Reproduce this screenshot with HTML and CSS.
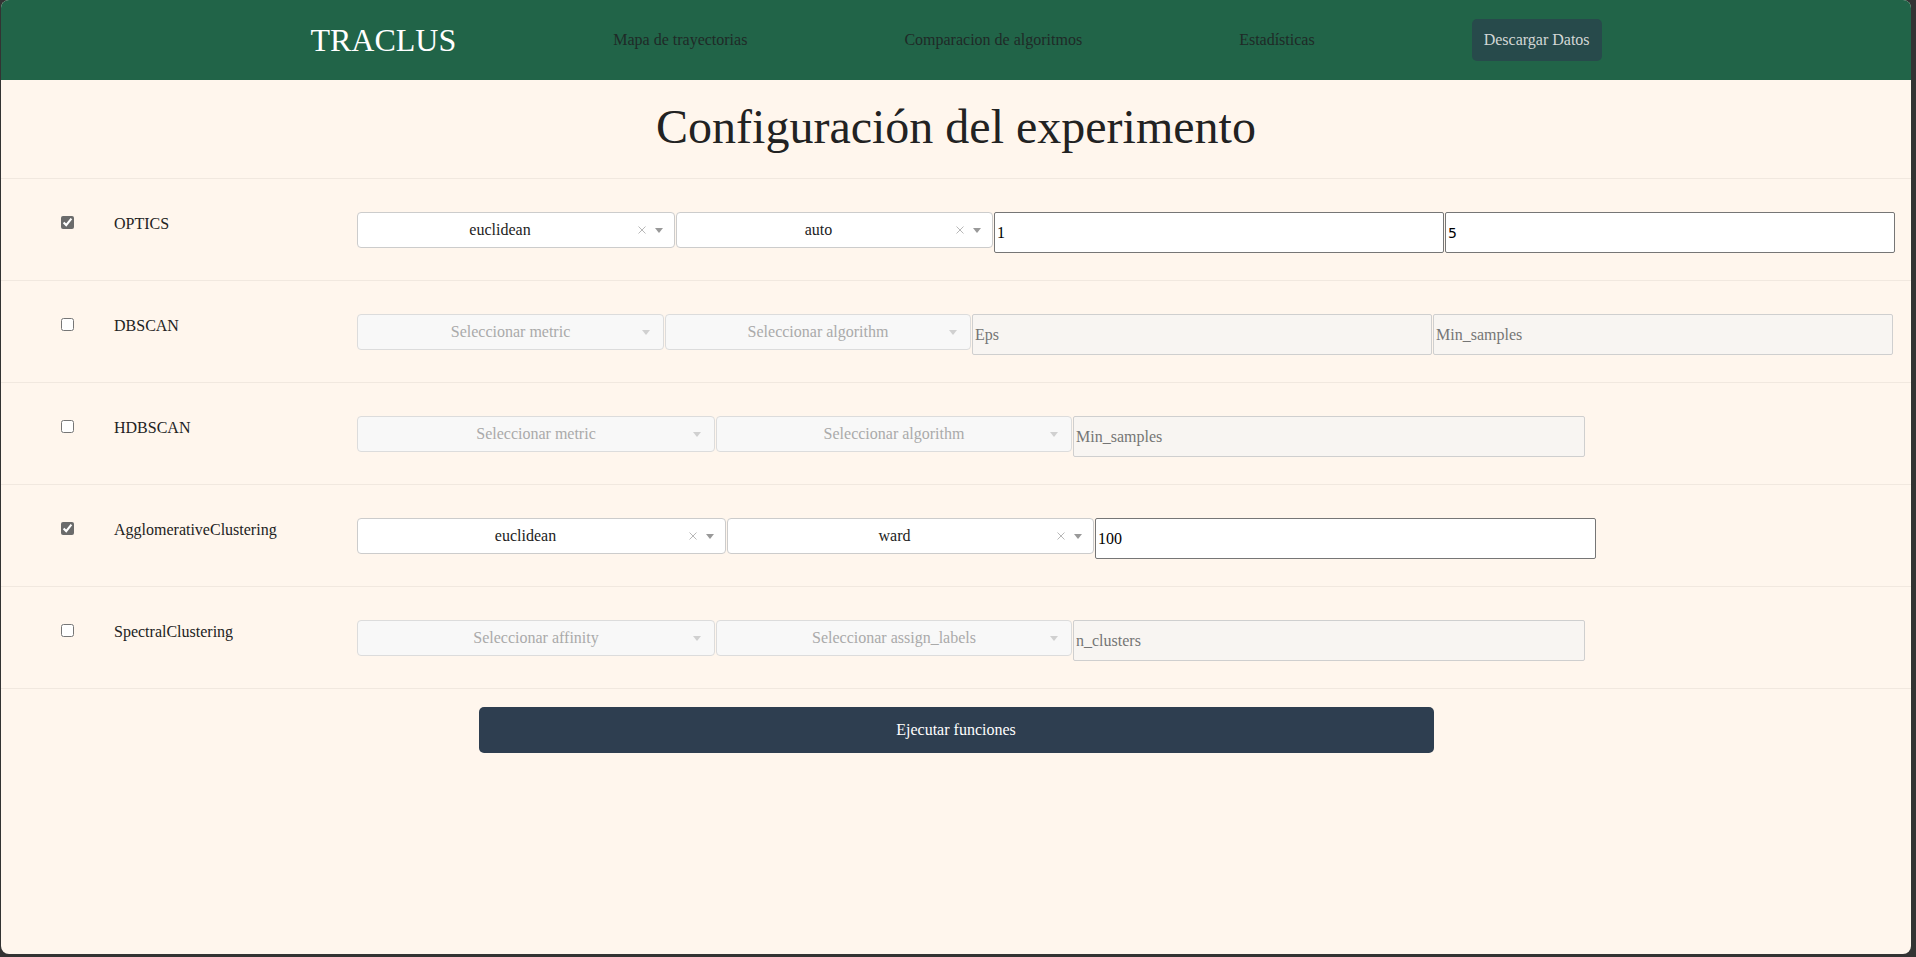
FILE: index.html
```html
<!DOCTYPE html>
<html lang="es">
<head>
<meta charset="utf-8">
<title>TRACLUS</title>
<link rel="stylesheet" href="styles.css">
</head>
<body>
<div class="window">
  <nav class="nav">
    <div class="brand">TRACLUS</div>
    <a class="nav-link">Mapa de trayectorias</a>
    <a class="nav-link">Comparacion de algoritmos</a>
    <a class="nav-link">Estadísticas</a>
    <button class="nav-btn">Descargar Datos</button>
  </nav>
  <main>
    <h1 class="title">Configuración del experimento</h1>

    <div class="row">
      <div class="algo"><input type="checkbox" class="chk" checked><span class="algo-name">OPTICS</span></div>
      <div class="controls c-optics">
        <div class="sel"><span class="sel-val clearable">euclidean</span><span class="ind"><svg class="x" width="8" height="8" viewBox="0 0 8 8"><path d="M0.5 0.5L7.5 7.5M7.5 0.5L0.5 7.5"/></svg><span class="arrow"></span></span></div>
        <div class="sel"><span class="sel-val clearable">auto</span><span class="ind"><svg class="x" width="8" height="8" viewBox="0 0 8 8"><path d="M0.5 0.5L7.5 7.5M7.5 0.5L0.5 7.5"/></svg><span class="arrow"></span></span></div>
        <input class="inp serif" type="text" value="1">
        <input class="inp sans" type="text" value="5">
      </div>
    </div>

    <div class="row">
      <div class="algo"><input type="checkbox" class="chk"><span class="algo-name">DBSCAN</span></div>
      <div class="controls c-dbscan">
        <div class="sel disabled"><span class="sel-val">Seleccionar metric</span><span class="ind"><span class="arrow"></span></span></div>
        <div class="sel disabled"><span class="sel-val">Seleccionar algorithm</span><span class="ind"><span class="arrow"></span></span></div>
        <input class="inp" type="text" placeholder="Eps" disabled>
        <input class="inp" type="text" placeholder="Min_samples" disabled>
      </div>
    </div>

    <div class="row">
      <div class="algo"><input type="checkbox" class="chk"><span class="algo-name">HDBSCAN</span></div>
      <div class="controls c-three">
        <div class="sel disabled"><span class="sel-val">Seleccionar metric</span><span class="ind"><span class="arrow"></span></span></div>
        <div class="sel disabled"><span class="sel-val">Seleccionar algorithm</span><span class="ind"><span class="arrow"></span></span></div>
        <input class="inp" type="text" placeholder="Min_samples" disabled>
      </div>
    </div>

    <div class="row">
      <div class="algo"><input type="checkbox" class="chk" checked><span class="algo-name">AgglomerativeClustering</span></div>
      <div class="controls c-agglo">
        <div class="sel"><span class="sel-val clearable">euclidean</span><span class="ind"><svg class="x" width="8" height="8" viewBox="0 0 8 8"><path d="M0.5 0.5L7.5 7.5M7.5 0.5L0.5 7.5"/></svg><span class="arrow"></span></span></div>
        <div class="sel"><span class="sel-val clearable">ward</span><span class="ind"><svg class="x" width="8" height="8" viewBox="0 0 8 8"><path d="M0.5 0.5L7.5 7.5M7.5 0.5L0.5 7.5"/></svg><span class="arrow"></span></span></div>
        <input class="inp serif" type="text" value="100">
      </div>
    </div>

    <div class="row last">
      <div class="algo"><input type="checkbox" class="chk"><span class="algo-name">SpectralClustering</span></div>
      <div class="controls c-three">
        <div class="sel disabled"><span class="sel-val">Seleccionar affinity</span><span class="ind"><span class="arrow"></span></span></div>
        <div class="sel disabled"><span class="sel-val">Seleccionar assign_labels</span><span class="ind"><span class="arrow"></span></span></div>
        <input class="inp" type="text" placeholder="n_clusters" disabled>
      </div>
    </div>

    <div class="actions">
      <button class="run">Ejecutar funciones</button>
    </div>
  </main>
</div>
</body>
</html>
```
FILE: styles.css
```css
* { box-sizing: border-box; }
html, body { margin: 0; padding: 0; }
body {
  background: #333333;
  font-family: "Liberation Serif", "Times New Roman", serif;
  font-size: 16px;
  color: #222;
}
.window {
  margin: 0 5px 0 1px;
  height: 954px;
  border-radius: 8px;
  overflow: hidden;
  background: #fff6ed;
}
.nav {
  height: 80px;
  background: #216448;
  display: flex;
  align-items: center;
  justify-content: center;
  gap: 157px;
}
.brand {
  font-size: 32px;
  color: #ffffff;
  line-height: 1;
}
.nav-link {
  color: #1f2a27;
  font-size: 16px;
  text-decoration: none;
}
.nav-btn {
  font-family: "Liberation Serif", "Times New Roman", serif;
  font-size: 16px;
  color: #d3d7d6;
  background: #274a4b;
  border: none;
  border-radius: 5px;
  height: 42px;
  padding: 0 12px;
}
.title {
  font-size: 48px;
  font-weight: normal;
  text-align: center;
  margin: 19px 0 24px;
  line-height: normal;
  color: #222;
}
.row {
  display: flex;
  align-items: flex-start;
  border-top: 1px solid #f1e8df;
  padding: 33px 0 0;
  height: 102px;
}
.row.last {
  border-bottom: 1px solid #f1e8df;
  height: 103px;
}
.algo {
  width: 356px;
  flex: none;
  height: 20px;
  display: flex;
  align-items: center;
  padding-left: 60px;
}
.chk {
  width: 13px;
  height: 13px;
  margin: 0;
  accent-color: #6b6b6b;
}
.algo-name {
  margin-left: 40px;
  margin-top: 3px;
  font-size: 16px;
  color: #222;
}
.controls {
  display: grid;
  column-gap: 1px;
  align-items: start;
}
.c-optics { grid-template-columns: 318px 317px 450px 450px; }
.c-dbscan { grid-template-columns: 307px 306px 460px 460px; }
.c-three { grid-template-columns: 358px 356px 512px; }
.c-agglo { grid-template-columns: 369px 367px 501px; }

.sel {
  position: relative;
  height: 36px;
  background: #ffffff;
  border: 1px solid #cccccc;
  border-radius: 4px;
  display: flex;
  align-items: center;
}
.sel.disabled {
  background: #f8f8f8;
  border-color: #dcdcdc;
}
.sel-val {
  flex: 1;
  text-align: center;
  color: #222;
  white-space: nowrap;
}
.sel-val.clearable { padding-right: 32px; }
.sel.disabled .sel-val { color: #aaaaaa; }
.ind {
  position: absolute;
  right: 11px;
  top: 0;
  bottom: 0;
  display: flex;
  align-items: center;
  gap: 9px;
}
.sel.disabled .ind { right: 13px; }
.x path {
  stroke: #b8b8b8;
  stroke-width: 1;
  fill: none;
}
.arrow {
  width: 0;
  height: 0;
  border-left: 4px solid transparent;
  border-right: 4px solid transparent;
  border-top: 5px solid #999999;
}
.sel.disabled .arrow { border-top-color: #d0d0d0; }

.inp {
  height: 41px;
  margin: 0;
  padding: 0 2px;
  border: 1px solid #767676;
  border-radius: 2px;
  background: #ffffff;
  font-family: "Liberation Serif", "Times New Roman", serif;
  font-size: 16px;
  color: #000;
  width: 100%;
  outline: none;
}
.inp.sans { font-family: "DejaVu Sans", "Liberation Sans", sans-serif; font-size: 14px; }
.inp:disabled {
  background: #f8f5f2;
  border-color: #cfcfcf;
}
.inp::placeholder { color: #757575; opacity: 1; }

.actions {
  display: flex;
  justify-content: center;
  padding-top: 18px;
}
.run {
  width: 50%;
  height: 46px;
  background: #2e3e50;
  color: #ffffff;
  border: none;
  border-radius: 5px;
  font-family: "Liberation Serif", "Times New Roman", serif;
  font-size: 16px;
}
```
